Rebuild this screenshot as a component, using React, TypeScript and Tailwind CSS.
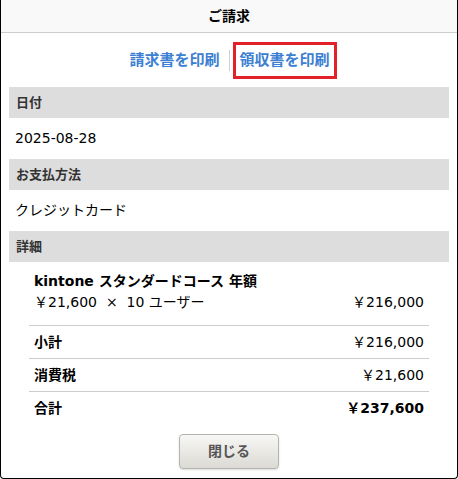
const font = { fontFamily: '"DejaVu Sans", "Noto Sans CJK JP", sans-serif' };

function SectionBar({ label }: { label: string }) {
  return (
    <div className="h-[31px] bg-[#dddddd] px-[7px] flex items-center text-[13px] font-bold text-[#333]">
      {label}
    </div>
  );
}

function TotalRow({ label, amount, strong, last }: { label: string; amount: string; strong?: boolean; last?: boolean }) {
  return (
    <div className={`flex items-center justify-between px-[5px] h-[33px] ${last ? '' : 'border-b border-[#cccccc]'}`}>
      <span className="font-bold text-[14px] text-black">{label}</span>
      <span className={`text-[14px] text-black ${strong ? 'font-bold' : ''}`}>{amount}</span>
    </div>
  );
}

export default function App() {
  return (
    <div style={font} className="w-[458px] h-[479px] bg-white border-x border-b border-black rounded-b-[4px] flex flex-col">
      <header className="h-[33px] shrink-0 bg-[#f9f9f9] border-b border-[#cccccc] flex items-center justify-center text-[14px] font-bold text-black">
        ご請求
      </header>

      <div className="h-[54px] pl-[8px] flex items-center justify-center text-[15px] font-bold text-[#3b80d2]">
        <a className="pr-[9px]">請求書を印刷</a>
        <span className="w-px h-[21px] bg-[#d0d0d0]" />
        <a className="ml-[3px] h-[37px] px-[4px] flex items-center border-[3px] border-[#e3212b]">領収書を印刷</a>
      </div>

      <div className="px-2">
        <SectionBar label="日付" />
        <div className="h-[41px] flex items-center px-[6px] text-[14px] text-black">2025-08-28</div>

        <SectionBar label="お支払方法" />
        <div className="h-[41px] flex items-center px-[6px] text-[14px] text-black">クレジットカード</div>

        <SectionBar label="詳細" />
        <div className="px-5 pt-[9px]">
          <div className="px-[5px] pb-[12px] border-b border-[#cccccc]">
            <div className="text-[14px] font-bold text-black leading-[21px]">kintone スタンダードコース 年額</div>
            <div className="flex justify-between text-[14px] text-black leading-[21px]">
              <span>￥21,600&nbsp;&nbsp;×&nbsp;&nbsp;10 ユーザー</span>
              <span>￥216,000</span>
            </div>
          </div>
          <TotalRow label="小計" amount="￥216,000" />
          <TotalRow label="消費税" amount="￥21,600" />
          <TotalRow label="合計" amount="￥237,600" strong last />
        </div>

        <div className="flex justify-center mt-[9px]">
          <button className="w-[100px] h-[35px] rounded-[4px] border border-[#b5b5b0] bg-gradient-to-b from-[#f7f7f5] to-[#dcdad4] shadow-[0_1px_2px_rgba(0,0,0,0.15)] text-[14px] font-bold text-[#555]">
            閉じる
          </button>
        </div>
      </div>
    </div>
  );
}
